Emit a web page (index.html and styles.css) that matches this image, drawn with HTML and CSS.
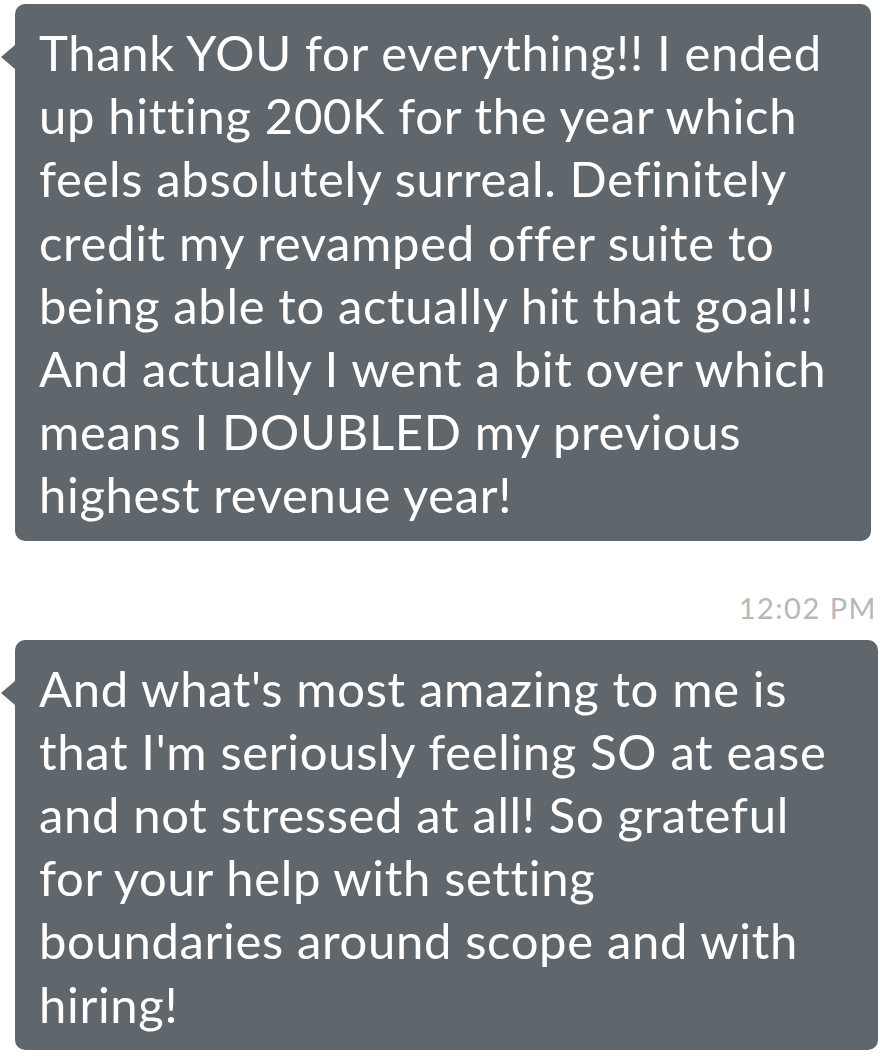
FILE: index.html
```html
<!DOCTYPE html>
<html>
<head>
<meta charset="utf-8">
<link rel="stylesheet" href="styles.css">
</head>
<body>
<div class="thread">
  <div class="bubble bubble-first">Thank YOU for everything!! I ended<br>up hitting 200K for the year which<br>feels absolutely surreal. Definitely<br>credit my revamped offer suite to<br>being able to actually hit that goal!!<br>And actually I went a bit over which<br>means I DOUBLED my previous<br>highest revenue year!</div>
  <div class="time">12:02 PM</div>
  <div class="bubble bubble-second">And what's most amazing to me is<br>that I'm seriously feeling SO at ease<br>and not stressed at all! So grateful<br>for your help with setting<br>boundaries around scope and with<br>hiring!</div>
</div>
</body>
</html>
```
FILE: styles.css
```css
html, body {
  margin: 0;
  padding: 0;
  background: #ffffff;
}
.thread {
  display: flex;
  flex-direction: column;
  align-items: flex-start;
  padding: 4px 0 0 15px;
  font-family: Lato, "Noto Sans", sans-serif;
  font-variant-ligatures: none;
}
.bubble {
  position: relative;
  box-sizing: border-box;
  background: #5f666c;
  color: #ffffff;
  border-radius: 10px;
  padding: 17px 20px 14px 24px;
  font-size: 49px;
  letter-spacing: 0.65px;
  line-height: 63.2px;
  white-space: nowrap;
}
.bubble::before {
  content: "";
  position: absolute;
  left: -14px;
  top: 41px;
  border-right: 14px solid #5f666c;
  border-top: 12px solid transparent;
  border-bottom: 12px solid transparent;
}
.bubble-first {
  width: 856px;
}
.bubble-second {
  width: 863px;
}
.time {
  align-self: stretch;
  text-align: right;
  padding-right: 3px;
  margin-top: 50px;
  margin-bottom: 15px;
  color: #b8b8b8;
  font-size: 29px;
  letter-spacing: 1.5px;
  line-height: 34px;
}
```
